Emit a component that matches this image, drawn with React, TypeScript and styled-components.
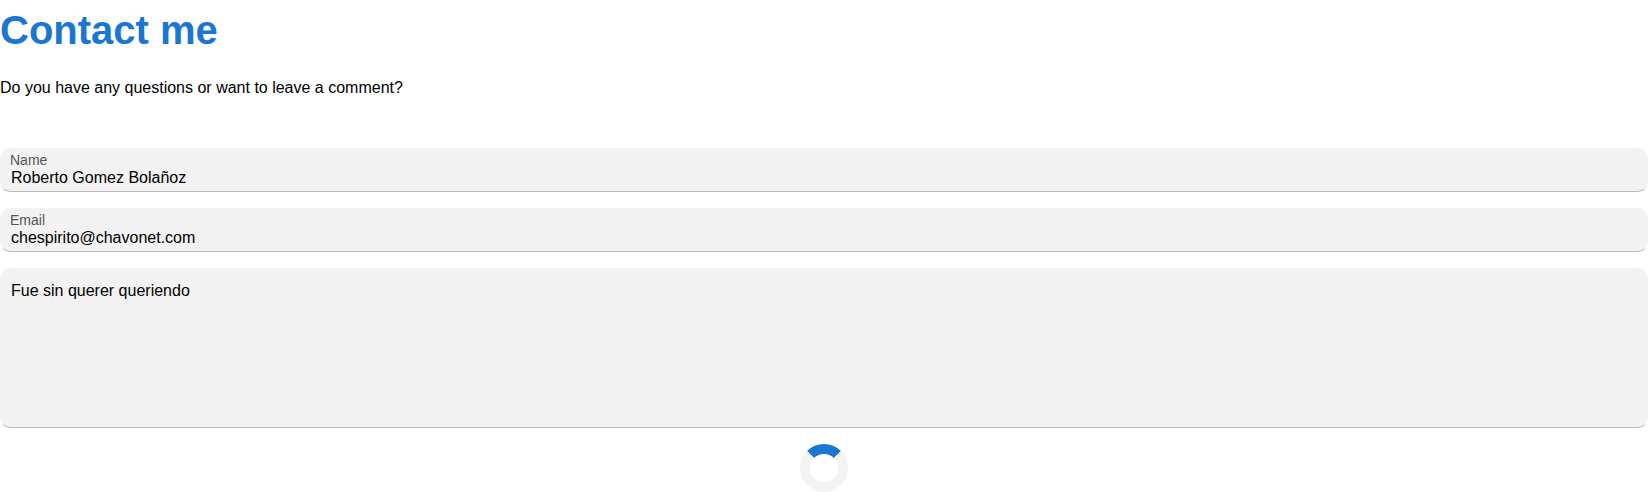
import React from 'react';
import styled, { createGlobalStyle, css } from 'styled-components';

const GlobalStyle = createGlobalStyle`
  * { box-sizing: border-box; }
  body { margin: 0; background: #fff; font-family: "Liberation Sans", Arial, sans-serif; overflow: hidden; }
`;
const Title = styled.h1`
  margin: 8px 0 0;
  font-size: 40px;
  line-height: 45px;
  color: #1976d2;
`;
const Intro = styled.p`
  margin: 26px 0 0;
  font-size: 16px;
  line-height: 18px;
  color: #000;
`;
const Form = styled.form`
  display: flex;
  flex-direction: column;
  gap: 16px;
  margin-top: 51px;
`;
const surface = css`
  width: 100%;
  background: #f2f2f2;
  border: 1px solid #f2f2f2;
  border-bottom-color: #b8b8b8;
  border-radius: 10px;
`;
const Field = styled.label`
  ${surface}
  display: flex;
  flex-direction: column;
  height: 44px;
  padding: 3px 9px 0;
`;
const FieldLabel = styled.span`
  font-size: 14px;
  line-height: 16px;
  color: #555;
`;
const Input = styled.input`
  border: 0;
  outline: 0;
  margin-top: 1px;
  padding: 0 1px;
  background: transparent;
  font: 16px/18px "Liberation Sans", Arial, sans-serif;
  height: 18px;
  color: #000;
`;
const Message = styled.textarea`
  ${surface}
  display: block;
  height: 160px;
  padding: 13px 10px;
  outline: 0;
  resize: none;
  font: 16px/18px "Liberation Sans", Arial, sans-serif;
  color: #000;
`;
const Spinner = styled.div`
  align-self: center;
  width: 48px;
  height: 48px;
  border: 10px solid #f3f3f3;
  border-top-color: #1976d2;
  border-radius: 50%;
`;

export default function App() {
  return (
    <>
      <GlobalStyle />
      <Title>Contact me</Title>
      <Intro>Do you have any questions or want to leave a comment?</Intro>
      <Form>
        <Field>
          <FieldLabel>Name</FieldLabel>
          <Input defaultValue="Roberto Gomez Bolañoz" />
        </Field>
        <Field>
          <FieldLabel>Email</FieldLabel>
          <Input defaultValue="chespirito@chavonet.com" />
        </Field>
        <Message defaultValue="Fue sin querer queriendo" />
        <Spinner />
      </Form>
    </>
  );
}
